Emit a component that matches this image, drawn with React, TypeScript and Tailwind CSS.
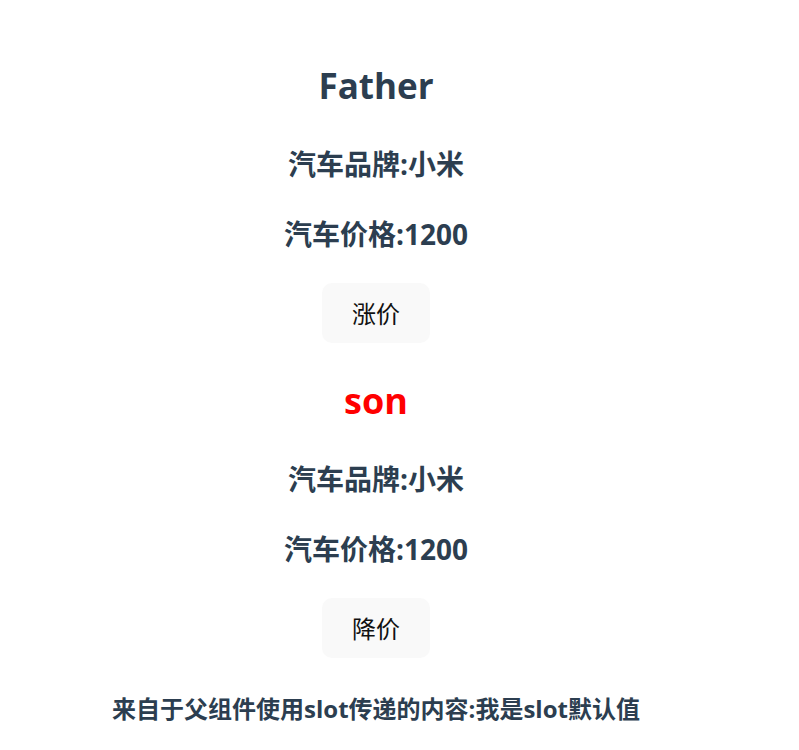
import { useState } from "react";

const latin = "font-['Open_Sans','Noto_Sans_CJK_SC',sans-serif]";

function CarInfo({ brand, price }: { brand: string; price: number }) {
  return (
    <>
      <h2 className="mt-[38px] text-[28px] leading-[36px] font-bold">汽车品牌:{brand}</h2>
      <h2 className="mt-[34px] text-[28px] leading-[36px] font-bold">汽车价格:{price}</h2>
    </>
  );
}

function PriceButton({ label, onClick }: { label: string; onClick: () => void }) {
  return (
    <button
      onClick={onClick}
      className="mt-[31px] w-[108px] h-[60px] rounded-[10px] bg-[#f9f9f9] text-[24px] leading-[32px] font-normal text-[#111] font-['Noto_Sans_CJK_SC',sans-serif]"
    >
      {label}
    </button>
  );
}

export default function App() {
  const [price, setPrice] = useState(1200);
  const brand = "小米";

  return (
    <div className={`min-h-screen bg-white ${latin}`}>
      <div className="w-[752px] flex flex-col items-center text-center text-[#2c3e50]">
        {/* Father */}
        <h1 className="mt-[64px] text-[35px] leading-[44px] font-bold">Father</h1>
        <CarInfo brand={brand} price={price} />
        <PriceButton label="涨价" onClick={() => setPrice(price + 100)} />

        {/* Son */}
        <h1 className="mt-[36px] text-[36px] leading-[44px] font-bold text-[#ff0000]">son</h1>
        <CarInfo brand={brand} price={price} />
        <PriceButton label="降价" onClick={() => setPrice(price - 100)} />

        <h3 className="mt-[35px] text-[24px] leading-[32px] font-bold">
          来自于父组件使用slot传递的内容:我是slot默认值
        </h3>
      </div>
    </div>
  );
}
